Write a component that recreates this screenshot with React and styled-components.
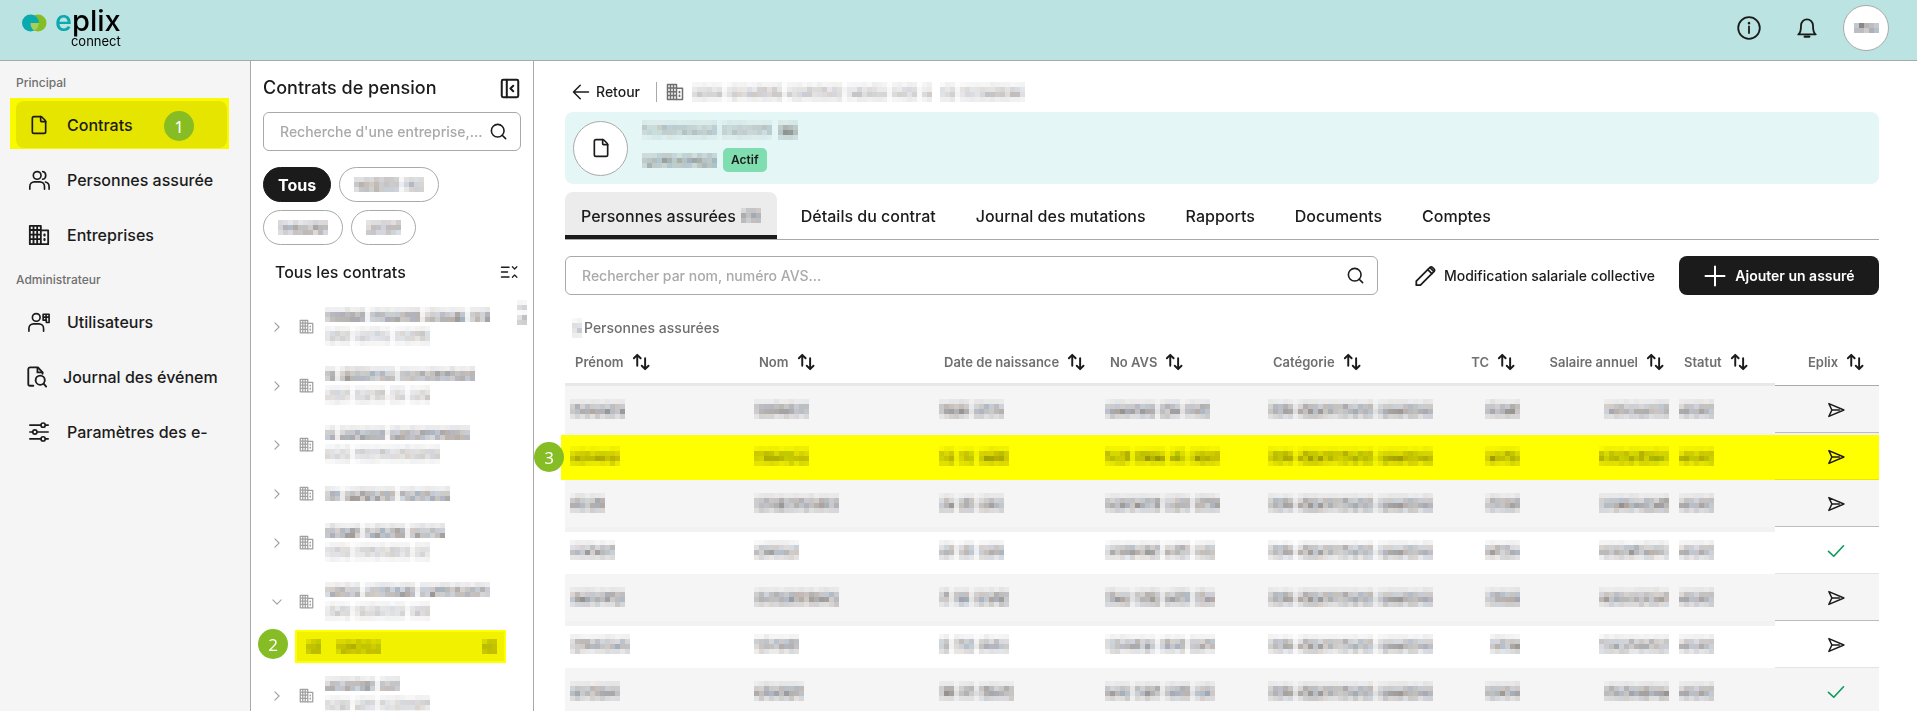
import styled, { createGlobalStyle, css } from "styled-components";
import { File, Search } from "lucide-react";

const GlobalStyle = createGlobalStyle`
  *,
  *::before,
  *::after {
    box-sizing: border-box;
  }

  body {
    margin: 0;
    color: #1b1b1b;
    background: #fff;
    font-family: Inter, "Liberation Sans", sans-serif;
    font-size: 16px;
    font-weight: 500;
  }

  button,
  input {
    font: inherit;
    color: inherit;
  }

  button {
    padding: 0;
    border: none;
    background: none;
    cursor: pointer;
  }

  svg {
    display: block;
    flex-shrink: 0;
  }
`;

/* ---------- icons ---------- */

const Icon = ({ size = 20, width = 2, children }) => (
  <svg
    width={size}
    height={size}
    viewBox="0 0 24 24"
    fill="none"
    stroke="currentColor"
    strokeWidth={width}
    strokeLinecap="round"
    strokeLinejoin="round"
    aria-hidden="true"
  >
    {children}
  </svg>
);

const BuildingIcon = ({ size = 20 }) => (
  <Icon size={size} width={2}>
    <path d="M2 2h12v20H2zM6 2v20M10 2v20M2 6.5h12M2 11.5h12M2 16.5h12" />
    <path d="M14 7h8v15h-8" />
    <path d="M18 11.5v1M18 16.5v1" strokeWidth="2.5" />
  </Icon>
);

const UsersIcon = () => (
  <Icon size={22} width={1.8}>
    <circle cx="10" cy="7" r="4.2" />
    <path d="M2 22v-3a5 5 0 0 1 5-5h6a5 5 0 0 1 5 5v3" />
    <path d="M16 2.8a4.3 4.3 0 0 1 0 8.4M19 14.2a5 5 0 0 1 4 4.8v3" />
  </Icon>
);

const UserAdminIcon = () => (
  <Icon size={22} width={1.8}>
    <circle cx="9" cy="7" r="4.2" />
    <path d="M1 22v-3a5 5 0 0 1 5-5h6a5 5 0 0 1 5 5v3" />
    <path d="M16.5 3.5H23v9h-3v-2.5h-3.5zM19.7 3.5V10M16.5 6.7H23" />
  </Icon>
);

const FileSearchIcon = () => (
  <Icon size={22} width={2}>
    <path d="M8 21.5H4.5a2 2 0 0 1-2-2v-16a2 2 0 0 1 2-2H13L18 7v1.5" />
    <path d="M12.5 2v5H18" />
    <circle cx="15.5" cy="15.5" r="5" />
    <path d="M19.2 19.2 22 22.5" />
  </Icon>
);

const SlidersIcon = () => (
  <Icon size={22} width={1.8}>
    <path d="M2 4.5h12M19 4.5h3M2 12h3M10 12h12M2 19.5h12M19 19.5h3" />
    <circle cx="16.5" cy="4.5" r="2.3" />
    <circle cx="7.5" cy="12" r="2.3" />
    <circle cx="16.5" cy="19.5" r="2.3" />
  </Icon>
);

const CollapseIcon = () => (
  <Icon size={22} width={2.2}>
    <rect x="3" y="3" width="18" height="19" rx="1.5" />
    <path d="M8.5 3v19M15.5 9.5l-3 3 3 3" />
  </Icon>
);

const FoldListIcon = () => (
  <Icon size={18} width={1.6}>
    <path d="M2 5.5h10M2 12h8M2 18.5h10" strokeWidth="2" />
    <path d="m16.5 5 3 3 3-3M16.5 19l3-3 3 3" />
  </Icon>
);

const SortIcon = () => (
  <Icon size={18} width={2.6}>
    <path d="M7 17V3M2.5 7 7 2.5 11.5 7" />
    <path d="M17.5 7v14M13 17l4.5 4.5L22 17" />
  </Icon>
);

const SendIcon = () => (
  <Icon size={18} width={2}>
    <path d="M2.5 3.5 22.5 12l-20 8.5 4-8.5z" />
    <path d="M6.5 12h10" />
  </Icon>
);

const CheckIcon = () => (
  <Icon size={18} width={2.2}>
    <path d="m2 12.5 7 6.5L22 5" />
  </Icon>
);

const PencilIcon = () => (
  <Icon size={22} width={1.9}>
    <path d="M2.5 17.5 15 5l4.5 4.5L7 22H2.5z" />
    <path d="m15 5 2.2-2.2a2.2 2.2 0 0 1 3.1 0l1.4 1.4a2.2 2.2 0 0 1 0 3.1l-2.2 2.2" />
    <path d="m17.5 3 4 4" />
  </Icon>
);

const PlusIcon = () => (
  <Icon size={24} width={2}>
    <path d="M12 2.5v19M2.5 12h19" />
  </Icon>
);

const ArrowLeftIcon = () => (
  <Icon size={18} width={2}>
    <path d="M22 12H2M11 3l-9 9 9 9" />
  </Icon>
);

const InfoIcon = () => (
  <Icon size={24} width={1.8}>
    <circle cx="12" cy="12" r="10.8" />
    <path d="M12 10.5V17" />
    <path d="M12 7v.2" strokeWidth="2.4" />
  </Icon>
);

const BellIcon = () => (
  <Icon size={22} width={2}>
    <path d="M2.5 19C5 17.5 5.5 14 5.5 9a6.5 6.5 0 0 1 13 0c0 5 .5 8.5 3 10z" />
    <path d="M9.5 21.5h5" strokeWidth="2.5" />
  </Icon>
);

const Chevron = ({ open }) => (
  <Icon size={10} width={2.6}>
    {open ? <path d="m2 7 10 10L22 7" /> : <path d="m7 2 10 10L7 22" />}
  </Icon>
);

const LogoMark = () => (
  <svg width="25" height="18" viewBox="0 0 25 18" aria-hidden="true">
    <circle cx="16" cy="9" r="8.5" fill="#86bd24" />
    <circle cx="8.5" cy="9" r="8.5" fill="#0aa9b0" />
    <path d="M8.5 9H17a8.5 8.5 0 0 1-4.7 7.6C9.500 15 8.500 12 8.500 9z" fill="#a5cf55" />
  </svg>
);

/* ---------- masked text ---------- */

const tints = ["#8f8f92", "#a99c94", "#94a2b2", "#8a8582", "#a9a9a9", "#9c9caa"];

const levels = {
  row: [0.16, 0.66, 0.86, 0.4],
  title: [0.25, 0.8, 0.85],
  sub: [0.14, 0.45, 0.45, 0.14],
  faint: [0.14, 0.4, 0.55, 0.2],
  chip: [0.45, 0.8, 0.6],
  avatar: [1, 0.9],
  scroll: [0.15, 0.5, 0.1, 0.7, 0.7],
};

function noise(seed, n) {
  const x = Math.sin(seed * 91.7 + n * 47.3) * 9631.3;
  return x - Math.floor(x);
}

const MosaicSvg = styled.svg`
  mix-blend-mode: multiply;
`;

// words holds the length of each masked word, counted in cells
const Mosaic = ({ words, seed = 1, kind = "row", cell = 5 }) => {
  const rows = levels[kind];
  const cols = [];
  words.forEach((length, i) => {
    if (i > 0) cols.push(0.25);
    for (let n = 0; n < length; n++) cols.push(n === 0 ? 0.8 : 1);
  });
  return (
    <MosaicSvg
      width={cols.length * cell}
      height={rows.length * cell}
      shapeRendering="crispEdges"
      aria-hidden="true"
    >
      {rows.map((level, y) =>
        cols.map((weight, x) => {
          const n = noise(seed, y * 60 + x);
          return (
            <rect
              key={`${x}-${y}`}
              x={x * cell}
              y={y * cell}
              width={cell}
              height={cell}
              fill={tints[Math.floor(n * tints.length)]}
              opacity={level * weight * (0.55 + noise(seed + 3, x * 9 + y) * 0.45)}
            />
          );
        })
      )}
    </MosaicSvg>
  );
};

/* ---------- layout ---------- */

const Page = styled.div`
  display: flex;
  flex-direction: column;
  height: 100vh;
  overflow: hidden;
`;

const Header = styled.header`
  display: flex;
  align-items: flex-start;
  justify-content: space-between;
  flex-shrink: 0;
  height: 61px;
  padding: 0 28px 0 22px;
  background: #bbe3e1;
  border-bottom: 1px solid #a9a9a9;
`;

const Logo = styled.a`
  display: flex;
  gap: 8px;
  padding-top: 4px;
  color: #000;
  text-decoration: none;

  svg {
    margin-top: 10px;
  }
`;

const LogoText = styled.span`
  display: flex;
  flex-direction: column;
  align-items: flex-end;
  font-size: 29px;
  line-height: 34px;

  span {
    color: #0aa9b0;
  }

  small {
    margin-top: -4px;
    font-size: 13px;
    line-height: 14px;
    font-weight: 400;
  }
`;

const HeaderActions = styled.div`
  display: flex;
  align-items: center;
  gap: 26px;
  padding-top: 5px;

  button {
    display: grid;
    place-items: center;
    width: 32px;
    height: 46px;
  }

  button:last-child {
    width: 46px;
    margin-left: -6px;
    border: 1px solid #a9a9a9;
    border-radius: 50%;
    background: #fff;
  }
`;

const Body = styled.div`
  display: flex;
  flex: 1;
  min-height: 0;
`;

const Sidebar = styled.nav`
  position: relative;
  z-index: 0;
  flex: 0 0 251px;
  min-width: 0;
  padding: 0 23px 0 16px;
  background: #f5f5f5;
  border-right: 1px solid #a9a9a9;
`;

const SidebarHeading = styled.h2`
  margin: 14px 0 10px;
  font-size: 12px;
  line-height: 16px;
  font-weight: 500;
  color: #6f6f6f;
`;

const NavList = styled.div`
  display: flex;
  flex-direction: column;
  gap: 8px;
`;

const NavItem = styled.a`
  position: relative;
  display: flex;
  align-items: center;
  gap: 17px;
  height: 47px;
  padding: 0 0 0 12px;
  border-radius: 8px;
  color: inherit;
  text-decoration: none;

  ${(props) =>
    props.$tight &&
    css`
      gap: 15px;
      padding-left: 10px;
    `}

  ${(props) =>
    props.$active &&
    css`
      background: #e5e500;

      &::before {
        content: "";
        position: absolute;
        inset: -3px -2px -1px -6px;
        z-index: -1;
        background: #f9f900;
      }
    `}
`;

const NavIcon = styled.span`
  display: grid;
  place-items: center;
  flex: 0 0 22px;
`;

const NavLabel = styled.span`
  white-space: nowrap;
`;

const Step = styled.span`
  position: absolute;
  display: grid;
  place-items: center;
  width: 30px;
  height: 30px;
  border-radius: 50%;
  background: #86bd24;
  color: #fff;
  font-family: "Noto Sans", sans-serif;
  font-size: 17px;
  font-weight: 400;
`;

const NavStep = styled(Step)`
  top: 10px;
  right: 33px;
`;

const TreeStep = styled(Step)`
  top: -3px;
  left: -39px;
`;

const RowStep = styled(Step)`
  top: 9px;
  left: -31px;
`;

const Panel = styled.aside`
  flex: 0 0 283px;
  min-width: 0;
  padding: 15px 12px 0;
  border-right: 1px solid #a9a9a9;
  overflow: hidden;
`;

const PanelHead = styled.div`
  display: flex;
  align-items: center;
  justify-content: space-between;
  margin-bottom: 12px;

  h1 {
    margin: 0;
    font-size: 18px;
    line-height: 24px;
    font-weight: 500;
  }
`;

const SearchBox = styled.label`
  display: flex;
  align-items: center;
  gap: 4px;
  flex: 1;
  height: 39px;
  padding: 0 12px 0 16px;
  border: 1px solid #a9a9a9;
  border-radius: 6px;

  input {
    flex: 1;
    min-width: 0;
    padding: 0;
    border: none;
    outline: none;
    background: none;
    font-size: 14px;
  }

  input::placeholder {
    color: #a9a9a9;
    opacity: 1;
  }
`;

const Chips = styled.div`
  display: flex;
  flex-wrap: wrap;
  gap: 8px;
  margin: 16px 0 17px;
`;

const Chip = styled.button`
  display: grid;
  place-items: center;
  height: 35px;
  padding: 0 14px;
  border: 1px solid #a9a9a9;
  border-radius: 18px;

  ${(props) =>
    props.$active &&
    css`
      border-color: #1b1b1b;
      background: #1b1b1b;
      color: #fff;
      font-weight: 700;
    `}
`;

const TreeHead = styled.div`
  display: flex;
  align-items: center;
  justify-content: space-between;
  margin-bottom: 15px;
  padding: 0 3px 0 12px;

  h2 {
    margin: 0;
    font-size: 16px;
    line-height: 20px;
    font-weight: 500;
  }
`;

const Tree = styled.div`
  position: relative;
  display: flex;
  flex-direction: column;
`;

const ScrollMark = styled.span`
  position: absolute;
  top: 3px;
  right: -6px;
`;

const TreeItem = styled.button`
  display: flex;
  align-items: center;
  height: ${(props) => (props.$single ? "39px" : "59px")};
  flex-shrink: 0;
  padding-left: 9px;
  color: #a0a0a0;
`;

const TreeIcon = styled.span`
  margin: 0 11px 0 17px;
`;

const TreeLines = styled.span`
  display: flex;
  flex-direction: column;
  gap: 4px;
`;

const TreeChild = styled.button`
  position: relative;
  display: flex;
  align-items: center;
  justify-content: space-between;
  flex-shrink: 0;
  height: 33px;
  margin: -1px 15px 3px 32px;
  padding: 0 7px 0 9px;
  background: #f1f100;
  border: 2px solid #ff0;
`;

const ChildName = styled.span`
  display: flex;
  gap: 15px;
`;

const Main = styled.main`
  flex: 1;
  min-width: 0;
  padding: 11px 38px 0 31px;
`;

const Crumbs = styled.div`
  display: flex;
  align-items: center;
  height: 40px;
  padding-left: 7px;
`;

const BackButton = styled.button`
  display: flex;
  align-items: center;
  gap: 6px;
  padding-right: 16px;
  font-size: 14px;
  line-height: 20px;
  font-weight: 500;
`;

const Company = styled.div`
  display: flex;
  align-items: center;
  gap: 8px;
  height: 20px;
  padding-left: 9px;
  border-left: 1px solid #a9a9a9;
  color: #6f6f6f;
`;

const Banner = styled.section`
  display: flex;
  align-items: center;
  gap: 14px;
  height: 72px;
  padding: 0 8px;
  border-radius: 8px;
  background: #e4f6f5;
`;

const RoundIcon = styled.span`
  display: grid;
  place-items: center;
  width: 55px;
  height: 55px;
  border: 1px solid #a9a9a9;
  border-radius: 50%;
  background: #fff;
`;

const BannerText = styled.div`
  display: flex;
  flex-direction: column;
  gap: 8px;
  margin-bottom: 4px;
`;

const BannerLine = styled.div`
  display: flex;
  align-items: center;
  gap: 6px;
`;

const StatusTag = styled.span`
  padding: 4px 8px;
  border-radius: 5px;
  background: #80ddb0;
  font-size: 12px;
  line-height: 16px;
  font-weight: 600;
`;

const Tabs = styled.div`
  display: flex;
  gap: 8px;
  margin-top: 8px;
  border-bottom: 1px solid #a9a9a9;
`;

const Tab = styled.button`
  display: flex;
  align-items: center;
  gap: 5px;
  height: 47px;
  padding: 0 16px;
  border-radius: 8px 8px 0 0;
  white-space: nowrap;

  ${(props) =>
    props.$active &&
    css`
      background: linear-gradient(to top, #1b1b1b 4px, #ececec 4px);
    `}
`;

const Toolbar = styled.div`
  display: flex;
  align-items: center;
  margin: 16px 0 23px;
`;

const TextButton = styled.button`
  display: flex;
  align-items: center;
  gap: 8px;
  padding: 0 24px 0 36px;
  font-size: 14px;
  font-weight: 500;
  white-space: nowrap;
`;

const PrimaryButton = styled.button`
  display: flex;
  align-items: center;
  justify-content: center;
  gap: 8px;
  width: 200px;
  height: 39px;
  border-radius: 8px;
  background: #1b1b1b;
  color: #fff;
  font-size: 14px;
  font-weight: 600;
  white-space: nowrap;
`;

const Count = styled.div`
  display: flex;
  align-items: center;
  gap: 2px;
  padding-left: 7px;
  font-size: 14px;
  line-height: 20px;
  color: #6f6f6f;
`;

const Table = styled.table`
  width: 100%;
  table-layout: fixed;
  border-collapse: collapse;
`;

const HeadCell = styled.th`
  height: 48px;
  padding: 0 10px;
  text-align: ${(props) => props.$align || "left"};
  font-size: 13px;
  font-weight: 600;
  color: #6f6f6f;
  white-space: nowrap;
  box-shadow: inset 0 -3px #e8e8e8;

  button {
    display: inline-flex;
    align-items: center;
    gap: 8px;
    font-size: 13px;
    line-height: 18px;
    vertical-align: middle;
  }

  svg {
    color: #1b1b1b;
  }

  &:last-child {
    padding: 0 0 0 18px;
    box-shadow: inset 0 -1px #a9a9a9;
  }
`;

const Cell = styled.td`
  height: 47px;
  padding: 0 5px 2px;
  background: linear-gradient(#f2f2f2 5px, transparent 5px);

  svg {
    margin-left: ${(props) => (props.$align === "right" ? "auto" : "0")};
  }
`;

const EplixCell = styled.td`
  padding: 0 0 0 18px;
  box-shadow: inset 0 -1px #bdbdbd;
  color: ${(props) => (props.$done ? "#0c9b5c" : "#1b1b1b")};

  svg {
    margin: 0 auto;
  }
`;

const Row = styled.tr`
  background: #fff;

  &:nth-child(even) ${EplixCell} {
    box-shadow: inset 0 -1px #e4e4e4;
  }

  &:nth-child(odd) {
    background: #f5f5f5;
  }

  &:nth-child(odd) ${Cell} {
    background: none;
  }

  ${(props) =>
    props.$marked &&
    css`
      && ${Cell}, && ${EplixCell} {
        background: linear-gradient(#f2f2f2 2px, #ff0 2px);
      }

      && td:first-child {
        position: relative;
      }

      && td:first-child::before {
        content: "";
        position: absolute;
        inset: 2px 100% 0 -4px;
        background: #ff0;
      }

      && ${EplixCell} {
        box-shadow: inset 0 -1px #e8e800;
      }
    `}
`;

/* ---------- data ---------- */

const mainNav = [
  { label: "Contrats", icon: <File size={20} strokeWidth={2} />, active: true },
  { label: "Personnes assurée", icon: <UsersIcon /> },
  { label: "Entreprises", icon: <BuildingIcon size={22} /> },
];

const adminNav = [
  { label: "Utilisateurs", icon: <UserAdminIcon /> },
  { label: "Journal des événem", icon: <FileSearchIcon />, tight: true },
  { label: "Paramètres des e-", icon: <SlidersIcon /> },
];

const contracts = [
  { title: [8, 10, 8, 4], sub: [5, 7, 7] },
  { title: [2, 11, 15], sub: [5, 6, 3, 4] },
  { title: [2, 9, 16], sub: [5, 17] },
  { title: [3, 10, 10], single: true },
  { title: [7, 8, 7], sub: [5, 11, 3] },
  { title: [7, 10, 14], sub: [5, 10, 4], open: true },
  { title: [10, 4], sub: [5, 4, 10] },
];

const tabs = [
  "Détails du contrat",
  "Journal des mutations",
  "Rapports",
  "Documents",
  "Comptes",
];

const columns = [
  { label: "Prénom", width: 184 },
  { label: "Nom", width: 185 },
  { label: "Date de naissance", width: 166 },
  { label: "No AVS", width: 163 },
  { label: "Catégorie", width: 182 },
  { label: "TC", width: 80, align: "right" },
  { label: "Salaire annuel", width: 149, align: "right" },
  { label: "Statut", width: 101 },
  { label: "Eplix", width: 104, align: "center" },
];

const people = [
  { first: 11, last: 11, birth: [6, 6], avs: [10, 4, 5], tc: 7, pay: 13 },
  { first: 10, last: 11, birth: [3, 3, 6], avs: [5, 6, 3, 6], tc: 7, pay: 14, marked: true },
  { first: 7, last: 17, birth: [3, 3, 5], avs: [11, 5, 5], tc: 7, pay: 14 },
  { first: 9, last: 9, birth: [3, 3, 5], avs: [11, 5, 4], tc: 7, pay: 14, done: true },
  { first: 11, last: 17, birth: [2, 3, 7], avs: [5, 5, 5, 4], tc: 7, pay: 14 },
  { first: 12, last: 9, birth: [2, 4, 6], avs: [10, 5, 5], tc: 6, pay: 14 },
  { first: 10, last: 10, birth: [3, 3, 7], avs: [5, 5, 5, 4], tc: 7, pay: 13, done: true },
];

const NavLinks = ({ items }) => (
  <NavList>
    {items.map((item) => (
      <NavItem key={item.label} href="#" $active={item.active} $tight={item.tight}>
        <NavIcon>{item.icon}</NavIcon>
        <NavLabel>{item.label}</NavLabel>
        {item.active && <NavStep>1</NavStep>}
      </NavItem>
    ))}
  </NavList>
);

const ContractTree = () => (
  <Tree>
    <ScrollMark>
      <Mosaic words={[2]} seed={2} kind="scroll" />
    </ScrollMark>
    {contracts.map((contract, i) => [
      <TreeItem key={i} $single={contract.single} aria-label="Entreprise masquée">
        <Chevron open={contract.open} />
        <TreeIcon>
          <BuildingIcon size={15} />
        </TreeIcon>
        <TreeLines>
          <Mosaic words={contract.title} seed={i + 2} kind="title" />
          {contract.sub && <Mosaic words={contract.sub} seed={i + 20} kind="sub" />}
        </TreeLines>
      </TreeItem>,
      contract.open && (
        <TreeChild key="child" aria-label="Contrat masqué">
          <TreeStep>2</TreeStep>
          <ChildName>
            <Mosaic words={[3]} seed={4} kind="chip" />
            <Mosaic words={[9]} seed={7} kind="chip" />
          </ChildName>
          <Mosaic words={[3]} seed={9} kind="chip" />
        </TreeChild>
      ),
    ])}
  </Tree>
);

const PersonRow = ({ person, index }) => {
  const seed = index * 11;

  return (
    <Row $marked={person.marked}>
      <Cell>
        {person.marked && <RowStep>3</RowStep>}
        <Mosaic words={[person.first]} seed={seed + 1} />
      </Cell>
      <Cell>
        <Mosaic words={[person.last]} seed={seed + 2} />
      </Cell>
      <Cell>
        <Mosaic words={person.birth} seed={seed + 3} />
      </Cell>
      <Cell>
        <Mosaic words={person.avs} seed={seed + 4} />
      </Cell>
      <Cell>
        <Mosaic words={[5, 15, 11]} seed={5} />
      </Cell>
      <Cell $align="right">
        <Mosaic words={[person.tc]} seed={seed + 6} />
      </Cell>
      <Cell $align="right">
        <Mosaic words={[person.pay]} seed={seed + 7} />
      </Cell>
      <Cell>
        <Mosaic words={[7]} seed={8} />
      </Cell>
      <EplixCell $done={person.done}>
        {person.done ? <CheckIcon /> : <SendIcon />}
      </EplixCell>
    </Row>
  );
};

const App = () => {
  return (
    <>
      <GlobalStyle />
      <Page>
        <Header>
          <Logo href="#">
            <LogoMark />
            <LogoText>
              <div>
                <span>e</span>plix
              </div>
              <small>connect</small>
            </LogoText>
          </Logo>
          <HeaderActions>
            <button aria-label="Informations">
              <InfoIcon />
            </button>
            <button aria-label="Notifications">
              <BellIcon />
            </button>
            <button aria-label="Profil">
              <Mosaic words={[5]} seed={6} kind="avatar" />
            </button>
          </HeaderActions>
        </Header>

        <Body>
          <Sidebar>
            <SidebarHeading>Principal</SidebarHeading>
            <NavLinks items={mainNav} />
            <SidebarHeading>Administrateur</SidebarHeading>
            <NavLinks items={adminNav} />
          </Sidebar>

          <Panel>
            <PanelHead>
              <h1>Contrats de pension</h1>
              <button aria-label="Réduire le panneau">
                <CollapseIcon />
              </button>
            </PanelHead>
            <SearchBox>
              <input
                type="text"
                aria-label="Recherche d'une entreprise"
                placeholder="Recherche d'une entreprise,..."
              />
              <Search size={19} />
            </SearchBox>
            <Chips>
              <Chip $active>Tous</Chip>
              <Chip aria-label="Filtre masqué">
                <Mosaic words={[9, 4]} seed={3} kind="chip" />
              </Chip>
              <Chip aria-label="Filtre masqué">
                <Mosaic words={[10]} seed={5} kind="chip" />
              </Chip>
              <Chip aria-label="Filtre masqué">
                <Mosaic words={[7]} seed={8} kind="chip" />
              </Chip>
            </Chips>
            <TreeHead>
              <h2>Tous les contrats</h2>
              <button aria-label="Tout replier">
                <FoldListIcon />
              </button>
            </TreeHead>
            <ContractTree />
          </Panel>

          <Main>
            <Crumbs>
              <BackButton>
                <ArrowLeftIcon />
                Retour
              </BackButton>
              <Company>
                <BuildingIcon size={18} />
                <Mosaic words={[6, 11, 11, 8, 5, 2]} seed={12} kind="faint" />
                <Mosaic words={[3, 13]} seed={14} kind="faint" />
              </Company>
            </Crumbs>

            <Banner>
              <RoundIcon>
                <File size={20} />
              </RoundIcon>
              <BannerText>
                <BannerLine>
                  <Mosaic words={[15, 10]} seed={15} kind="sub" />
                  <Mosaic words={[4]} seed={16} kind="row" />
                </BannerLine>
                <BannerLine>
                  <Mosaic words={[15]} seed={17} kind="chip" />
                  <StatusTag>Actif</StatusTag>
                </BannerLine>
              </BannerText>
            </Banner>

            <Tabs>
              <Tab $active>
                Personnes assurées
                <Mosaic words={[4]} seed={18} kind="chip" />
              </Tab>
              {tabs.map((tab) => (
                <Tab key={tab}>{tab}</Tab>
              ))}
            </Tabs>

            <Toolbar>
              <SearchBox>
                <input
                  type="text"
                  aria-label="Rechercher un assuré"
                  placeholder="Rechercher par nom, numéro AVS..."
                />
                <Search size={19} />
              </SearchBox>
              <TextButton>
                <PencilIcon />
                Modification salariale collective
              </TextButton>
              <PrimaryButton>
                <PlusIcon />
                Ajouter un assuré
              </PrimaryButton>
            </Toolbar>

            <Count>
              <Mosaic words={[2]} seed={19} kind="faint" />
              Personnes assurées
            </Count>

            <Table>
              <colgroup>
                {columns.map((column) => (
                  <col key={column.label} width={column.width} />
                ))}
              </colgroup>
              <thead>
                <tr>
                  {columns.map((column) => (
                    <HeadCell key={column.label} $align={column.align}>
                      <button>
                        {column.label}
                        <SortIcon />
                      </button>
                    </HeadCell>
                  ))}
                </tr>
              </thead>
              <tbody>
                {people.map((person, i) => (
                  <PersonRow key={i} person={person} index={i} />
                ))}
              </tbody>
            </Table>
          </Main>
        </Body>
      </Page>
    </>
  );
};

export default App;
